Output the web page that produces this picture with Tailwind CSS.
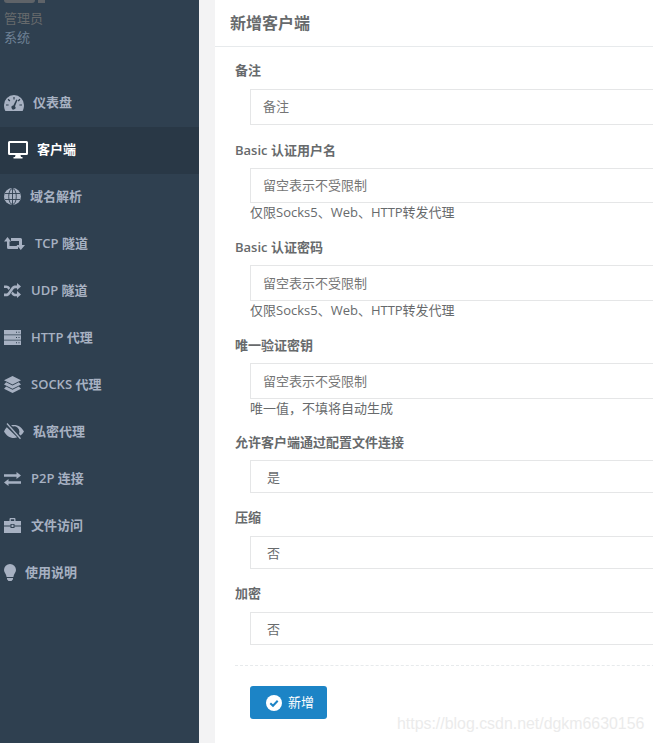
<!DOCTYPE html>
<html lang="zh-CN">
<head>
  <meta charset="UTF-8" />
  <meta name="viewport" content="width=device-width, initial-scale=1" />
  <title>新增客户端</title>
  <script src="https://cdn.jsdelivr.net/npm/@tailwindcss/browser@4"></script>
</head>
<body class="h-[743px] overflow-hidden bg-[#f3f3f4] font-['Open_Sans','Noto_Sans_CJK_SC',sans-serif] text-[13px] text-[#676a6c]">
  <div class="flex h-[743px]">
    <!-- sidebar -->
    <aside class="w-[199px] shrink-0 bg-[#2f4050]">
      <div class="flex h-[3px] gap-[3px] pl-[4px]">
        <div class="w-[31px] rounded-b-sm bg-[#5f6368]"></div>
        <div class="w-[7px] bg-[#5f6368]"></div>
      </div>
      <div class="mt-[6px] pl-[4px] leading-[19px]">
        <div class="text-[#676a6c]">管理员</div>
        <div class="text-[#6f8296]">系统</div>
      </div>
      <nav class="mt-[33px] text-[13px] font-semibold text-[#a7b1c2]">
        <a class="flex h-[47px] items-center gap-[9px] pb-[2px] pl-[4px]">
          <svg class="w-[20px] h-[16px]" viewBox="0 0 20 16" fill="#a7b1c2"><path fill-rule="evenodd" d="M10 0a10 10 0 0 1 10 10c0 2.200-.5 4.300-1.400 6H1.400C.5 14.300 0 12.200 0 10A10 10 0 0 1 10 0ZM9.400 2v2.600h1.200V2ZM4.500 3.800l-.9.9 1.800 1.800.9-.9ZM15.500 3.800l-1.800 1.800.9.9 1.800-1.800ZM2 9.400v1.200h2.600V9.400ZM15.400 9.400v1.200H18V9.400ZM12.300 4.600 9.300 10.500a2 2 0 1 0 1.700.7l2.500-6.100Z"/></svg>
          <span>仪表盘</span>
        </a>
        <a class="flex h-[47px] items-center gap-[9px] bg-[#293846] pb-[2px] pl-[8px] text-white">
          <svg class="w-[20px] h-[18px]" viewBox="0 0 20 18" fill="#fff"><path fill-rule="evenodd" d="M1.500 0h17A1.500 1.500 0 0 1 20 1.500v11a1.500 1.500 0 0 1-1.500 1.500H12.500l.5 2h1.500v1.500h-9V16H7l.5-2H1.500A1.500 1.500 0 0 1 0 12.500v-11A1.500 1.500 0 0 1 1.500 0ZM2 2v10h16V2H2Z"/></svg>
          <span>客户端</span>
        </a>
        <a class="flex h-[47px] items-center gap-[9px] pb-[2px] pl-[4px]">
          <svg class="w-[17px] h-[17px]" viewBox="0 0 17 17" fill="none"><circle cx="8.500" cy="8.500" r="8.500" fill="#a7b1c2"/><g stroke="#2f4050" stroke-width=".9"><ellipse cx="8.500" cy="8.500" rx="3.800" ry="8"/><path d="M8.500 0v17M1 5.500h15M1 11.500h15"/></g></svg>
          <span>域名解析</span>
        </a>
        <a class="flex h-[47px] items-center gap-[10px] pb-[2px] pl-[4px]">
          <svg class="w-[21px] h-[13px]" viewBox="0 0 21 13" fill="#a7b1c2"><path d="M3.500 0 7 4.600H5.500V9H14v3H4.500A1.500 1.500 0 0 1 3 10.500V4.600H0Z"/><path d="M7 1h9.500A1.500 1.500 0 0 1 18 2.500V8h3l-4.200 5-4.300-5H15V4H7Z"/></svg>
          <span>TCP 隧道</span>
        </a>
        <a class="flex h-[47px] items-center gap-[10px] pb-[2px] pl-[4px]">
          <svg class="w-[17px] h-[15px]" viewBox="0 0 17 15" fill="#a7b1c2"><path d="M13 0l4 3.500L13 7V5.200h-1.400c-1 0-1.700.5-2.300 1.300L5.800 11.400c-.9 1.200-2 1.800-3.500 1.800H0v-2.600h2c1 0 1.600-.5 2.200-1.300l3.500-5C8.600 3 9.800 2.500 11.300 2.500H13ZM0 2.500h2.300c1.500 0 2.600.7 3.400 1.800l.5.7-1.500 2.100-.6-.9C3.600 5.400 3 5 2 5H0ZM13 8l4 3.500L13 15v-1.800h-1.700c-1.500 0-2.600-.6-3.500-1.800l-.6-.8 1.500-2.100.7 1c.6.800 1.300 1.200 2.200 1.200H13Z"/></svg>
          <span>UDP 隧道</span>
        </a>
        <a class="flex h-[47px] items-center gap-[10px] pb-[2px] pl-[4px]">
          <svg class="w-[17px] h-[15px]" viewBox="0 0 17 15" fill="#a7b1c2"><path fill-rule="evenodd" d="M0 0h17v4.400H0ZM12 1.700v1h1v-1ZM14.500 1.700v1h1v-1ZM0 5.300h17v4.400H0ZM12 7v1h1V7ZM14.500 7v1h1V7ZM0 10.600h17V15H0ZM12 12.300v1h1v-1ZM14.500 12.300v1h1v-1Z"/></svg>
          <span>HTTP 代理</span>
        </a>
        <a class="flex h-[47px] items-center gap-[10px] pb-[2px] pl-[4px]">
          <svg class="w-[17px] h-[17px]" viewBox="0 0 17 17" fill="#a7b1c2"><path d="M8.500 0 17 4.200 8.500 8.400 0 4.200ZM2.200 6.300 8.500 9.400 14.800 6.300 17 8.400 8.500 12.700 0 8.400ZM2.200 10.600 8.500 13.700 14.800 10.600 17 12.700 8.500 17 0 12.700Z"/></svg>
          <span>SOCKS 代理</span>
        </a>
        <a class="flex h-[47px] items-center gap-[9px] pb-[2px] pl-[4px]">
          <svg class="w-[20px] h-[17px]" viewBox="0 0 20 17" fill="#a7b1c2"><path d="M7 2.400C8 2.100 9 2 10 2c4.500 0 8 2.700 10 6.500-.8 1.600-2 3-3.500 4.100L15 10.900c.2-.7.400-1.500.4-2.400A5.400 5.400 0 0 0 9 3.400ZM2.800 4.200 13.200 14.300c-1 .4-2.100.7-3.200.7-4.500 0-8-2.700-10-6.500.6-1.700 1.600-3.100 2.800-4.300Z"/><path d="M3 .4 16.500 15.500" fill="none" stroke="#2f4050" stroke-width="2.800"/><path d="M3.500 0 17 15.200l-1 1L2.500 1Z"/></svg>
          <span>私密代理</span>
        </a>
        <a class="flex h-[47px] items-center gap-[10px] pb-[2px] pl-[4px]">
          <svg class="w-[17px] h-[14px]" viewBox="0 0 17 14" fill="#a7b1c2"><path d="M12.500 0 17 3.500 12.500 7V4.700H0V2.300h12.500ZM4.500 7v2.300H17v2.400H4.500V14L0 10.500Z"/></svg>
          <span>P2P 连接</span>
        </a>
        <a class="flex h-[47px] items-center gap-[10px] pb-[2px] pl-[4px]">
          <svg class="w-[17px] h-[15px]" viewBox="0 0 17 15" fill="#a7b1c2"><path fill-rule="evenodd" d="M5.500 3V1.200C5.500.5 6 0 6.700 0h3.600c.7 0 1.200.5 1.200 1.200V3H17v4.500H10.500V6h-4v1.500H0V3ZM6.800 1.300V3h3.400V1.300ZM0 8.500h6.500V10h4V8.500H17V15H0ZM7.500 6.800h2V9h-2Z"/></svg>
          <span>文件访问</span>
        </a>
        <a class="flex h-[47px] items-center gap-[9px] pb-[2px] pl-[4px]">
          <svg class="w-[12px] h-[17px]" viewBox="0 0 12 17" fill="#a7b1c2"><path d="M6 0a6 6 0 0 1 6 6c0 2.600-2.300 3.900-2.600 7H2.600C2.300 9.900 0 8.600 0 6a6 6 0 0 1 6-6ZM3 14h6v1.200L7.500 17h-3L3 15.200Z"/></svg>
          <span>使用说明</span>
        </a>
      </nav>
    </aside>

    <!-- content -->
    <main class="relative ml-[16px] flex-1 bg-white">
      <h1 class="flex h-[47px] items-center border-b border-[#e7eaec] pl-[15px] text-[16px] font-semibold text-[#676a6c]">新增客户端</h1>
      <form class="pl-[20px] pt-[14px]">
        <label class="block h-[18px] font-semibold leading-[18px]">备注</label>
        <input class="mt-[10px] ml-[15px] block h-[36px] w-[420px] border border-[#e5e6e7] pb-[2px] pl-[12px] text-[13px] placeholder:text-[#757575]" placeholder="备注" />

        <label class="mt-[16px] block h-[18px] font-semibold leading-[18px]">Basic 认证用户名</label>
        <input class="mt-[9px] ml-[15px] block h-[35px] w-[420px] border border-[#e5e6e7] pb-[2px] pl-[12px] text-[13px] placeholder:text-[#757575]" placeholder="留空表示不受限制" />
        <p class="ml-[15px] h-[18px] leading-[18px]">仅限Socks5、Web、HTTP转发代理</p>

        <label class="mt-[17px] block h-[18px] font-semibold leading-[18px]">Basic 认证密码</label>
        <input class="mt-[9px] ml-[15px] block h-[36px] w-[420px] border border-[#e5e6e7] pl-[12px] text-[13px] placeholder:text-[#757575]" placeholder="留空表示不受限制" />
        <p class="ml-[15px] h-[18px] leading-[18px]">仅限Socks5、Web、HTTP转发代理</p>

        <label class="mt-[17px] block h-[18px] font-semibold leading-[18px]">唯一验证密钥</label>
        <input class="mt-[9px] ml-[15px] block h-[36px] w-[420px] border border-[#e5e6e7] pl-[12px] text-[13px] placeholder:text-[#757575]" placeholder="留空表示不受限制" />
        <p class="ml-[15px] h-[18px] leading-[18px]">唯一值，不填将自动生成</p>

        <label class="mt-[16px] block h-[18px] font-semibold leading-[18px]">允许客户端通过配置文件连接</label>
        <div class="mt-[9px] ml-[15px] flex h-[33px] w-[420px] items-center border border-[#e5e6e7] pl-[16px] pt-[2px]">是</div>

        <label class="mt-[15px] block h-[18px] font-semibold leading-[18px]">压缩</label>
        <div class="mt-[10px] ml-[15px] flex h-[33px] w-[420px] items-center border border-[#e5e6e7] pl-[16px] pt-[2px]">否</div>

        <label class="mt-[15px] block h-[18px] font-semibold leading-[18px]">加密</label>
        <div class="mt-[10px] ml-[15px] flex h-[33px] w-[420px] items-center border border-[#e5e6e7] pl-[16px] pt-[2px]">否</div>

        <div class="mt-[20px] border-t border-dashed border-[#e7eaec]"></div>

        <button type="button" class="mt-[20px] ml-[15px] flex h-[33px] w-[77px] items-center gap-[6px] rounded-[3px] bg-[#1c84c6] pl-[16px] text-white">
          <svg class="w-[16px] h-[16px]" viewBox="0 0 16 16"><circle cx="8" cy="8" r="8" fill="#fff"/><path d="M4.300 8.200 7 10.800l4.700-5" fill="none" stroke="#1c84c6" stroke-width="2"/></svg>
          <span>新增</span>
        </button>
      </form>
      <span class="absolute left-[182px] top-[715px] font-['Liberation_Sans',sans-serif] text-[15.9px] leading-[18px] text-[#ebebeb]">https://blog.csdn.net/dgkm6630156</span>
    </main>
  </div>
</body>
</html>
